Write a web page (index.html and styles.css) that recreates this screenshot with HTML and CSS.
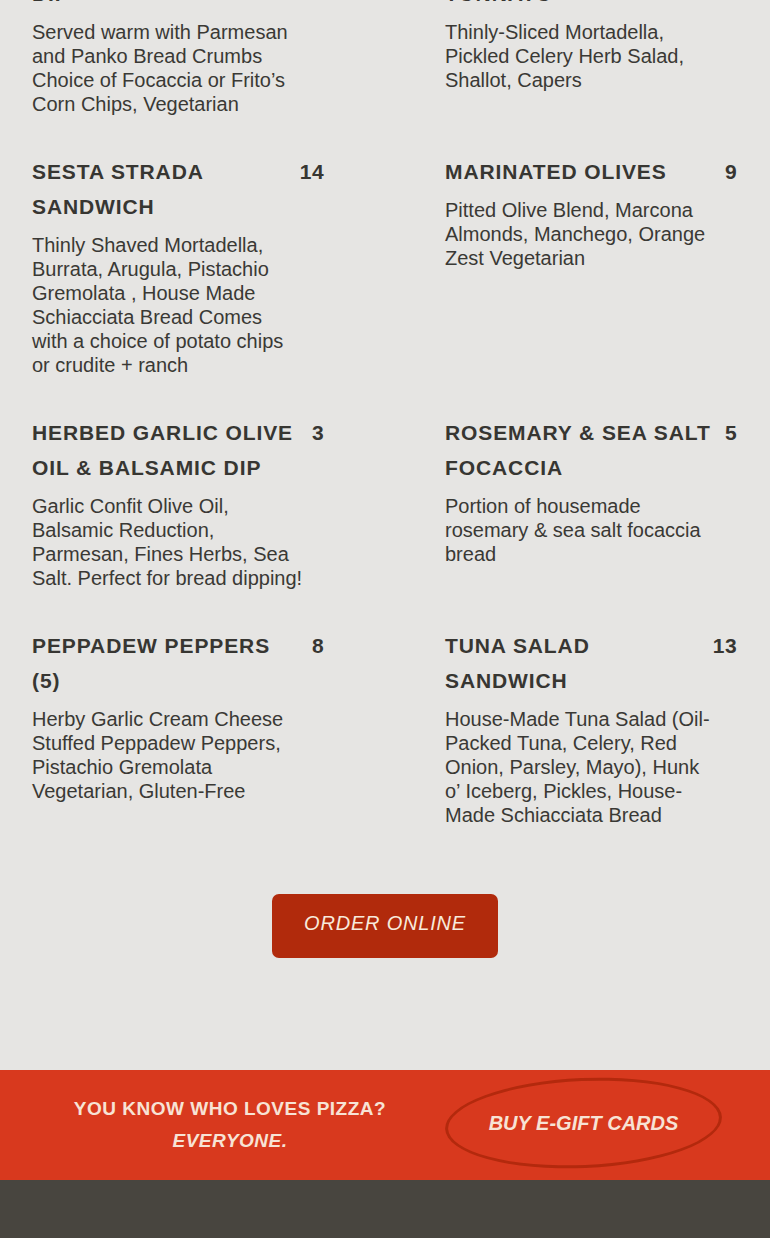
FILE: index.html
```html
<!DOCTYPE html>
<html lang="en">
<head>
<meta charset="utf-8">
<title>Menu</title>
<link rel="stylesheet" href="styles.css">
</head>
<body>
<main class="menu">
  <section class="item">
    <div class="item-head"><h3 class="item-title">WARM ARTICHOKE<br>DIP</h3><span class="item-price">12</span></div>
    <p class="item-desc">Served warm with Parmesan<br>and Panko Bread Crumbs<br>Choice of Focaccia or Frito’s<br>Corn Chips, Vegetarian</p>
  </section>
  <section class="item">
    <div class="item-head"><h3 class="item-title">MORTADELLA<br>TONNATO</h3><span class="item-price">13</span></div>
    <p class="item-desc">Thinly-Sliced Mortadella,<br>Pickled Celery Herb Salad,<br>Shallot, Capers</p>
  </section>
  <section class="item">
    <div class="item-head"><h3 class="item-title">SESTA STRADA<br>SANDWICH</h3><span class="item-price">14</span></div>
    <p class="item-desc">Thinly Shaved Mortadella,<br>Burrata, Arugula, Pistachio<br>Gremolata , House Made<br>Schiacciata Bread Comes<br>with a choice of potato chips<br>or crudite + ranch</p>
  </section>
  <section class="item">
    <div class="item-head"><h3 class="item-title">MARINATED OLIVES</h3><span class="item-price">9</span></div>
    <p class="item-desc">Pitted Olive Blend, Marcona<br>Almonds, Manchego, Orange<br>Zest Vegetarian</p>
  </section>
  <section class="item">
    <div class="item-head"><h3 class="item-title">HERBED GARLIC OLIVE<br>OIL &amp; BALSAMIC DIP</h3><span class="item-price">3</span></div>
    <p class="item-desc">Garlic Confit Olive Oil,<br>Balsamic Reduction,<br>Parmesan, Fines Herbs, Sea<br>Salt. Perfect for bread dipping!</p>
  </section>
  <section class="item">
    <div class="item-head"><h3 class="item-title">ROSEMARY &amp; SEA SALT<br>FOCACCIA</h3><span class="item-price">5</span></div>
    <p class="item-desc">Portion of housemade<br>rosemary &amp; sea salt focaccia<br>bread</p>
  </section>
  <section class="item">
    <div class="item-head"><h3 class="item-title">PEPPADEW PEPPERS<br>(5)</h3><span class="item-price">8</span></div>
    <p class="item-desc">Herby Garlic Cream Cheese<br>Stuffed Peppadew Peppers,<br>Pistachio Gremolata<br>Vegetarian, Gluten-Free</p>
  </section>
  <section class="item">
    <div class="item-head"><h3 class="item-title">TUNA SALAD<br>SANDWICH</h3><span class="item-price">13</span></div>
    <p class="item-desc">House-Made Tuna Salad (Oil-<br>Packed Tuna, Celery, Red<br>Onion, Parsley, Mayo), Hunk<br>o’ Iceberg, Pickles, House-<br>Made Schiacciata Bread</p>
  </section>
</main>

<div class="order">
  <a class="order-btn" href="#">ORDER ONLINE</a>
</div>

<section class="gift">
  <p class="gift-text">YOU KNOW WHO LOVES PIZZA?<em>EVERYONE.</em></p>
  <a class="gift-link" href="#">BUY E-GIFT CARDS</a>
</section>

<footer class="footer"></footer>
</body>
</html>
```

FILE: styles.css
```css
* { box-sizing: border-box; }

html, body {
  margin: 0;
  padding: 0;
}

body {
  background: #e6e5e3;
  font-family: "Liberation Sans", Arial, sans-serif;
  color: #3b3a36;
}

.menu {
  display: grid;
  grid-template-columns: 292px 292px;
  column-gap: 121px;
  row-gap: 40px;
  padding: 0 33px 0 32px;
  margin-top: -57px;
}

.item-head {
  display: flex;
  justify-content: space-between;
  align-items: flex-start;
  gap: 8px;
  margin-top: -2px;
  margin-bottom: 9px;
}

.item-title,
.item-price {
  margin: 0;
  font-size: 21px;
  font-weight: 700;
  line-height: 35px;
  letter-spacing: 0.9px;
  color: #373632;
}

.item-price {
  white-space: nowrap;
  letter-spacing: 0.4px;
}

.item-desc {
  margin: 0;
  font-size: 20px;
  line-height: 24px;
  color: #3a3935;
  white-space: nowrap;
}

.order {
  display: flex;
  justify-content: center;
  padding: 67px 0 112px;
}

.order-btn {
  display: flex;
  align-items: center;
  justify-content: center;
  width: 226px;
  height: 64px;
  padding-bottom: 5px;
  background: #b12a0c;
  border-radius: 7px;
  color: #f8eadc;
  font-size: 20px;
  font-style: italic;
  letter-spacing: 0.8px;
  text-decoration: none;
}

.gift {
  display: flex;
  align-items: center;
  gap: 58px;
  height: 110px;
  padding-left: 73px;
  background: #d8391e;
}

.gift-text {
  flex: none;
  margin: 0;
  width: 314px;
  text-align: center;
  white-space: nowrap;
  color: #f7e3d5;
  font-size: 19px;
  font-weight: 700;
  line-height: 32px;
  letter-spacing: 0.5px;
}

.gift-text em {
  display: block;
  font-style: italic;
}

.gift-link {
  flex: none;
  position: relative;
  display: flex;
  align-items: center;
  justify-content: center;
  width: 277px;
  height: 90px;
  margin-top: -4px;
  color: #f7e3d5;
  font-size: 20px;
  font-weight: 700;
  font-style: italic;
  text-decoration: none;
}

.gift-link::before {
  content: "";
  position: absolute;
  inset: 0;
  border: 3px solid #b3290d;
  border-radius: 50%;
  transform: rotate(-2.5deg);
}

.footer {
  height: 80px;
  background: #48453f;
}
```
